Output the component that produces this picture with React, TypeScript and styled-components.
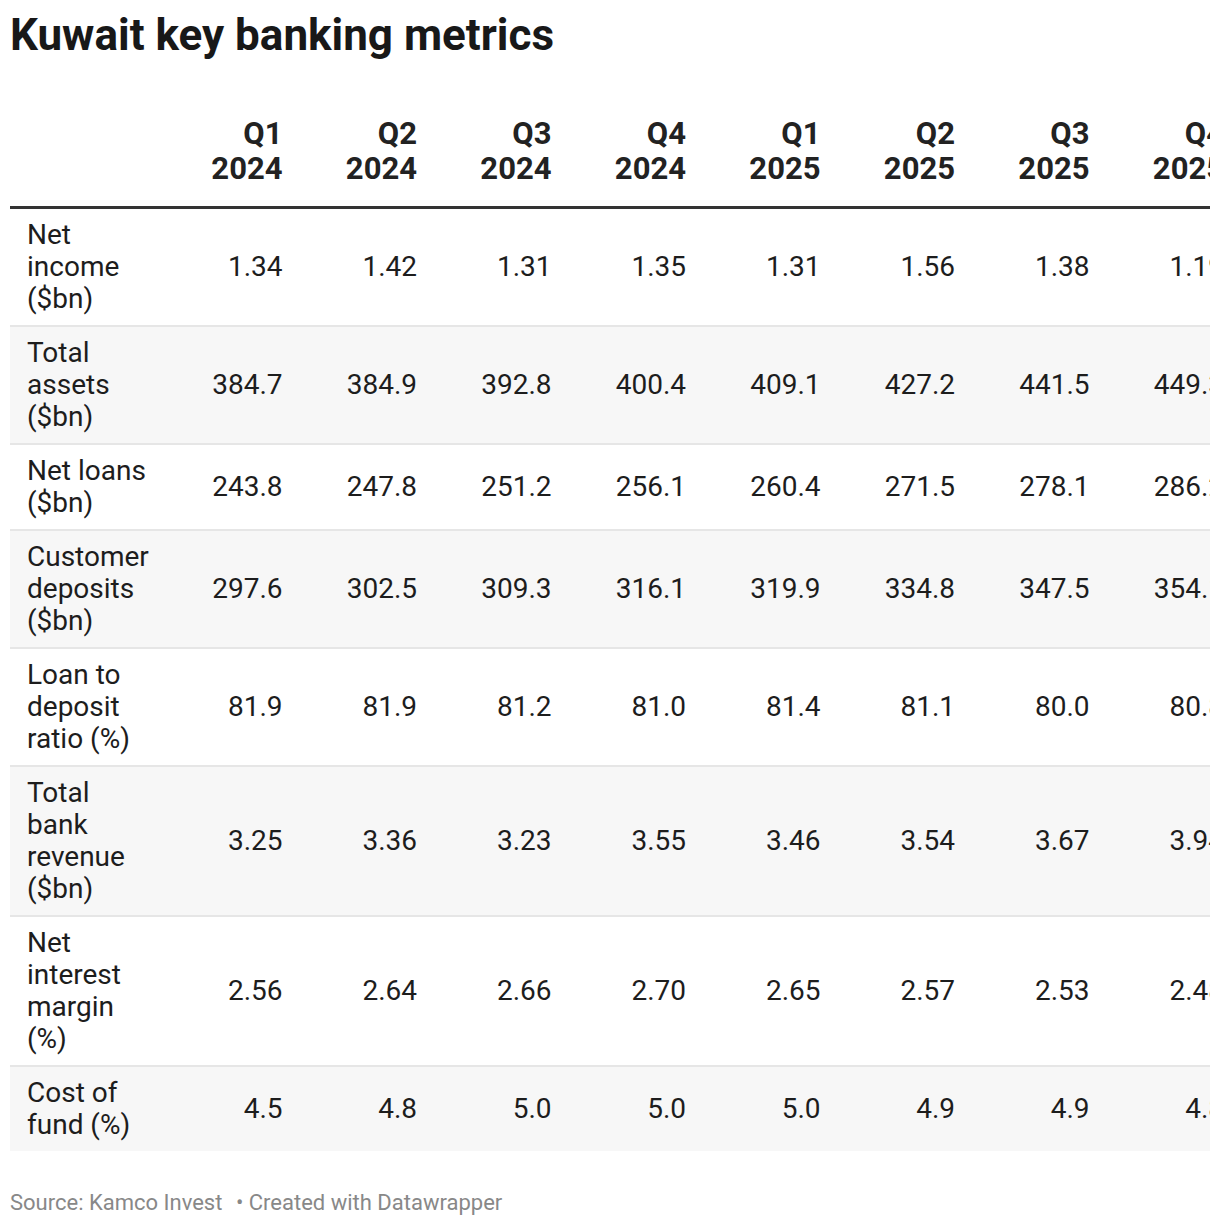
import React from 'react';
import styled, { createGlobalStyle } from 'styled-components';

const GlobalStyle = createGlobalStyle`
  body {
    margin: 0;
    background: #ffffff;
    font-family: Roboto, 'Liberation Sans', sans-serif;
    color: #1d1d1d;
  }
`;

interface Row {
  label: string;
  values: string[];
}

const periods = [
  ['Q1', '2024'],
  ['Q2', '2024'],
  ['Q3', '2024'],
  ['Q4', '2024'],
  ['Q1', '2025'],
  ['Q2', '2025'],
  ['Q3', '2025'],
  ['Q4', '2025'],
];

const rows: Row[] = [
  { label: 'Net income ($bn)', values: ['1.34', '1.42', '1.31', '1.35', '1.31', '1.56', '1.38', '1.19'] },
  { label: 'Total assets ($bn)', values: ['384.7', '384.9', '392.8', '400.4', '409.1', '427.2', '441.5', '449.3'] },
  { label: 'Net loans ($bn)', values: ['243.8', '247.8', '251.2', '256.1', '260.4', '271.5', '278.1', '286.2'] },
  { label: 'Customer deposits ($bn)', values: ['297.6', '302.5', '309.3', '316.1', '319.9', '334.8', '347.5', '354.1'] },
  { label: 'Loan to deposit ratio (%)', values: ['81.9', '81.9', '81.2', '81.0', '81.4', '81.1', '80.0', '80.8'] },
  { label: 'Total bank revenue ($bn)', values: ['3.25', '3.36', '3.23', '3.55', '3.46', '3.54', '3.67', '3.94'] },
  { label: 'Net interest margin (%)', values: ['2.56', '2.64', '2.66', '2.70', '2.65', '2.57', '2.53', '2.48'] },
  { label: 'Cost of fund (%)', values: ['4.5', '4.8', '5.0', '5.0', '5.0', '4.9', '4.9', '4.8'] },
];

const Page = styled.div`
  padding: 0 10px;
`;

const Title = styled.h1`
  margin: 0;
  padding-top: 9px;
  font-size: 44px;
  line-height: 1.2;
  font-weight: 700;
  color: #181818;
`;

const TableScroller = styled.div`
  width: 1200px;
  overflow: hidden;
  margin-top: 54px;
`;

const Table = styled.table`
  width: 1224px;
  table-layout: fixed;
  border-collapse: collapse;
  font-size: 28px;
  line-height: 32px;
`;

const HeadCell = styled.th<{ $first?: boolean }>`
  padding: 0 10px 20px ${(p) => (p.$first ? '17px' : '10px')};
  text-align: right;
  vertical-align: bottom;
  font-size: 31px;
  line-height: 35px;
  font-weight: 700;
  color: #222222;
  border-bottom: 3px solid #333333;
`;

const BodyRow = styled.tr<{ $striped: boolean; $last: boolean }>`
  background: ${(p) => (p.$striped ? '#f7f7f7' : '#ffffff')};
  border-bottom: ${(p) => (p.$last ? 'none' : '2px solid #e6e6e6')};
`;

const LabelCell = styled.td`
  padding: 10px 10px 10px 17px;
  text-align: left;
  vertical-align: middle;
`;

const ValueCell = styled.td`
  padding: 10px 10px 10px 0;
  text-align: right;
  vertical-align: middle;
  white-space: nowrap;
`;

const Footer = styled.div`
  margin-top: 39px;
  font-size: 22px;
  line-height: 26px;
  color: #888888;
`;

const Dot = styled.span`
  margin-left: 8px;
`;

export default function App() {
  return (
    <Page>
      <GlobalStyle />
      <Title>Kuwait key banking metrics</Title>
      <TableScroller>
        <Table>
          <colgroup>
            <col style={{ width: 148 }} />
            {periods.map((_, i) => (
              <col key={i} style={{ width: 134.5 }} />
            ))}
          </colgroup>
          <thead>
            <tr>
              <HeadCell $first />
              {periods.map(([q, y], i) => (
                <HeadCell key={i}>
                  {q}
                  <br />
                  {y}
                </HeadCell>
              ))}
            </tr>
          </thead>
          <tbody>
            {rows.map((row, i) => (
              <BodyRow key={row.label} $striped={i % 2 === 1} $last={i === rows.length - 1}>
                <LabelCell>{row.label}</LabelCell>
                {row.values.map((v, j) => (
                  <ValueCell key={j}>{v}</ValueCell>
                ))}
              </BodyRow>
            ))}
          </tbody>
        </Table>
      </TableScroller>
      <Footer>
        Source: Kamco Invest <Dot>• Created with Datawrapper</Dot>
      </Footer>
    </Page>
  );
}
